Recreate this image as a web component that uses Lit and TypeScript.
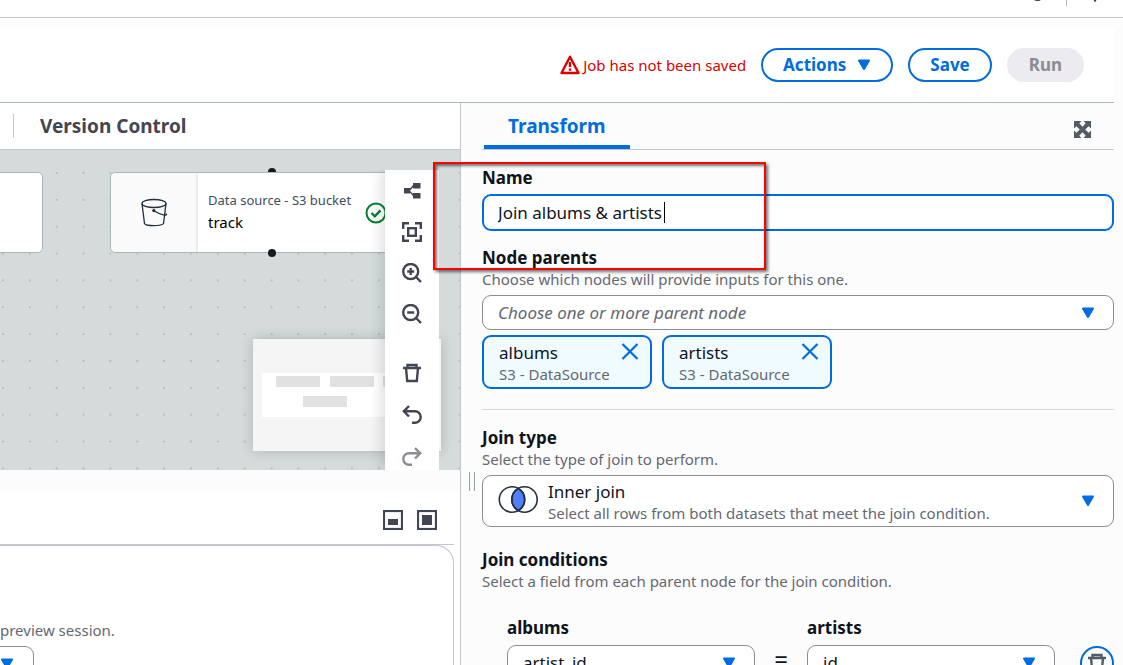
import { LitElement, html, css, svg, nothing } from "lit";
import { customElement, property, state } from "lit/decorators.js";

const base = css`
  * {
    box-sizing: border-box;
  }
  :host {
    font-family: "Noto Sans", "Open Sans", sans-serif;
    font-size: 17px;
    line-height: 22px;
    color: #0f141a;
  }
  button,
  input,
  select {
    font: inherit;
    color: inherit;
    margin: 0;
  }
  button {
    padding: 0;
    border: 0;
    background: none;
    display: flex;
    align-items: center;
    justify-content: center;
  }
  p {
    margin: 0;
  }
  svg {
    display: block;
    flex: none;
  }
`;

const caret = html`<svg class="caret" width="14" height="12" viewBox="0 0 14 12" aria-hidden="true">
  <path d="M2 1.5h10L7 10z" fill="#006ce0" stroke="#006ce0" stroke-width="2" stroke-linejoin="round" />
</svg>`;

const trash = svg`
  <path d="M1 5h18M5.5 5V2h9v3M4 5l1.2 13h9.6L16 5" />`;

const toolIcons: Record<string, unknown> = {
  layout: svg`<g fill="currentColor" stroke="none">
      <rect x="2" y="7" width="6" height="5.5" /><rect x="11" y="2" width="7.5" height="5.5" /><rect x="11" y="12" width="7.5" height="5.5" />
    </g><path d="M11.5 4.5L7 9.8l4.5 4.8" stroke-width="1.4" />`,
  fit: svg`<path d="M1.2 7V1.2H7M13 1.2h5.8V7M18.800 13v5.800H13M7 18.800H1.200V13" /><rect x="6.200" y="6.200" width="7.600" height="7.600" />`,
  zoomIn: svg`<circle cx="8.700" cy="8.500" r="7.500" /><path d="M14 14l5 5M5.200 8.500h7M8.700 5v7" />`,
  zoomOut: svg`<circle cx="8.700" cy="8.500" r="7.500" /><path d="M14 14l5 5M5.200 8.500h7" />`,
  remove: trash,
  undo: svg`<path d="M7 1L1.800 6.300 7 11.500M2 6.300h11a5.600 5.600 0 0 1 0 11.400h-3" />`,
  redo: svg`<path d="M13 1l5.200 5.300L13 11.500M18 6.300H7a5.600 5.600 0 0 0 0 11.400h3" />`,
};

@customElement("flow-canvas")
export class FlowCanvas extends LitElement {
  static styles = [
    base,
    css`
      :host {
        display: block;
        position: relative;
        overflow: hidden;
        background: #d5dbdb;
      }
      .dots {
        position: absolute;
        inset: 0;
        width: 100%;
        height: 100%;
      }
      .node {
        position: absolute;
        top: 22px;
        height: 81px;
        width: 324px;
        display: flex;
        background: #fff;
        border: 1px solid #aab7b8;
        border-radius: 5px;
      }
      .node.first {
        left: -281px;
      }
      .node.second {
        left: 110px;
      }
      .node::before,
      .node::after {
        content: "";
        position: absolute;
        left: 157px;
        width: 8px;
        height: 8px;
        border-radius: 4px;
        background: #16191f;
      }
      .node::before {
        top: -5px;
        clip-path: inset(0 0 4px 0);
      }
      .node::after {
        bottom: -5px;
      }
      .kind {
        width: 87px;
        display: flex;
        align-items: center;
        justify-content: center;
        background: #fafafa;
        border-right: 2px solid #eaeded;
        border-radius: 5px 0 0 5px;
      }
      .about {
        padding: 16px 14px 0 10px;
        font-size: 13px;
        color: #414d5c;
      }
      .title {
        color: #000;
        font-size: 15px;
      }
      .ok {
        align-self: center;
      }
      .minimap {
        position: absolute;
        left: 253px;
        bottom: 19px;
        box-shadow: 0 0 12px rgba(0, 28, 36, 0.2);
      }
      .tools {
        position: absolute;
        top: 20px;
        bottom: 0;
        right: 21px;
        width: 54px;
        background: #fff;
        box-shadow: -4px 0 12px rgba(0, 28, 36, 0.14);
        clip-path: inset(0 0 0 -20px);
        color: #424650;
      }
      .group button {
        width: 54px;
        height: 41px;
      }
      .group + .group {
        margin-top: 18px;
      }
      .group + .group button {
        height: 42px;
      }
      .tools button:disabled {
        color: #8c8c94;
      }
    `,
  ];

  private tool(name: string, label: string, disabled = false) {
    return html`<button aria-label=${label} ?disabled=${disabled}>
      <svg width="20" height="20" viewBox="0 0 20 20" fill="none" stroke="currentColor" stroke-width="2.4">${toolIcons[name]}</svg>
    </button>`;
  }

  render() {
    return html`
      <svg class="dots" aria-hidden="true">
        <defs>
          <pattern id="grid" x="2" y="22" width="26.86" height="26.86" patternUnits="userSpaceOnUse">
            <circle cx="0.900" cy="0.900" r="0.900" fill="#a3b0b1" />
          </pattern>
        </defs>
        <rect width="100%" height="100%" fill="url(#grid)" />
      </svg>
      <div class="node first"></div>
      <div class="node second">
        <div class="kind">
          <svg width="30" height="32" viewBox="0 0 30 32" fill="none" stroke="#232f3e" stroke-width="1.300">
            <ellipse cx="15" cy="6.500" rx="12" ry="4" />
            <path d="M3 6.500l2.500 20c1 2.800 17.500 2.800 19 0L27 6.500" />
            <path d="M15 13.800c3 2 7 4 11 4.500 2 0 2-1 .5-1.800" />
            <circle cx="14.800" cy="13.600" r="1" fill="#232f3e" />
          </svg>
        </div>
        <div class="about">
          <div>Data source - S3 bucket</div>
          <div class="title">track</div>
        </div>
        <svg class="ok" width="22" height="22" viewBox="0 0 22 22" fill="none" stroke="#00802f" stroke-width="2">
          <circle cx="11" cy="11" r="9.500" /><path d="M6.500 11l3.300 3.300 5.700-6" stroke-width="2.400" />
        </svg>
      </div>
      <svg class="minimap" width="188" height="112" viewBox="0 0 188 112" aria-hidden="true">
        <rect width="188" height="112" fill="#f5f5f5" />
        <rect x="9" y="34" width="170" height="44" fill="#fff" />
        <g fill="#e1e1e1">
          <rect x="23" y="37" width="44" height="11" /><rect x="77" y="37" width="44" height="11" />
          <rect x="130" y="37" width="44" height="11" /><rect x="50" y="57" width="44" height="11" />
        </g>
      </svg>
      <div class="tools">
        <div class="group">
          ${this.tool("layout", "Auto layout")} ${this.tool("fit", "Fit to screen")} ${this.tool("zoomIn", "Zoom in")}
          ${this.tool("zoomOut", "Zoom out")}
        </div>
        <div class="group">
          ${this.tool("remove", "Remove")} ${this.tool("undo", "Undo")} ${this.tool("redo", "Redo", true)}
        </div>
      </div>
    `;
  }
}

@customElement("drop-down")
export class DropDown extends LitElement {
  @property() label = "";
  @property() value = "";
  @property() note = "";
  @property({ type: Boolean }) placeholder = false;

  static styles = [
    base,
    css`
      :host {
        display: block;
      }
      .box {
        display: grid;
        align-items: center;
        background: #fff;
        border: 1px solid #8c8c94;
        border-radius: 9px;
      }
      .box > * {
        grid-area: 1 / 1;
      }
      select {
        appearance: none;
        width: 100%;
        height: 33px;
        padding: 0 40px 0 15px;
        border: 0;
        border-radius: 9px;
        background: transparent;
      }
      .placeholder select {
        font-style: italic;
        color: #656871;
      }
      .tall select {
        height: 50px;
        padding: 0 40px 18px 65px;
      }
      .note {
        padding: 23px 40px 0 65px;
        font-size: 15px;
        color: #656871;
        pointer-events: none;
      }
      .venn {
        margin: 0 0 2px 15px;
        pointer-events: none;
      }
      .caret {
        justify-self: end;
        margin-right: 18px;
        pointer-events: none;
      }
    `,
  ];

  render() {
    return html`<div class="box ${this.note ? "tall" : ""} ${this.placeholder ? "placeholder" : ""}">
      <select aria-label=${this.label}>
        <option>${this.value}</option>
      </select>
      ${this.note
        ? html`<span class="note">${this.note}</span>
            <svg class="venn" width="42" height="32" viewBox="0 0 42 32" fill="none" stroke="#232f3e" stroke-width="1.600">
              <path d="M20.250 4.500a12.700 12.700 0 0 1 0 22a12.700 12.700 0 0 1 0-22z" fill="#527fff" />
              <circle cx="14" cy="15.500" r="12.700" /><circle cx="26.500" cy="15.500" r="12.700" />
            </svg>`
        : nothing}
      ${caret}
    </div>`;
  }
}

@customElement("app-root")
export class AppRoot extends LitElement {
  @state() private name = "Join albums & artists";
  private parents = ["albums", "artists"];

  static styles = [
    base,
    css`
      :host {
        display: flex;
        flex-direction: column;
        height: 100vh;
        overflow: hidden;
        background: #fcfcfc;
      }
      .topbar {
        flex: none;
        height: 18px;
        background: #fff;
        border-bottom: 1px solid #c6c6cd;
        display: flex;
        justify-content: flex-end;
      }
      .header {
        flex: none;
        margin: 10px 9px 0 0;
        height: 75px;
        padding: 0 30px 0 0;
        background: #fff;
        border-bottom: 1px solid #aab7b8;
        display: flex;
        align-items: center;
        justify-content: flex-end;
        gap: 15px;
      }
      .warning {
        display: flex;
        align-items: center;
        gap: 3px;
        font-size: 15px;
        line-height: 20px;
        color: #db0000;
      }
      .pill {
        height: 34px;
        padding: 0 20px;
        border: 2px solid #006ce0;
        border-radius: 17px;
        background: #fff;
        color: #006ce0;
        font-weight: 700;
        gap: 11px;
      }
      .pill:disabled {
        border-color: #ebebf0;
        background: #ebebf0;
        color: #8c8c94;
      }
      .main {
        flex: 1;
        min-height: 0;
        display: grid;
        grid-template-columns: 461px minmax(0, 1fr);
        grid-template-rows: minmax(0, 1fr);
      }
      .left {
        display: flex;
        flex-direction: column;
        min-height: 0;
        border-right: 1px solid #c6c6cd;
      }
      .tabs {
        flex: none;
        height: 47px;
        display: flex;
        align-items: center;
        border-bottom: 1px solid #c6c6cd;
      }
      .left .tabs {
        background: #fff;
        padding-left: 13px;
      }
      .tab {
        font-size: 19px;
        font-weight: 700;
        color: #424650;
      }
      .left .tab {
        height: 24px;
        padding-left: 26px;
        border-left: 1px solid #c6c6cd;
      }
      flow-canvas {
        flex: 1;
      }
      .bottom {
        flex: none;
        height: 173px;
        margin-top: 22px;
        background: #fff;
        padding-right: 6px;
        display: flex;
        flex-direction: column;
      }
      .sizes {
        height: 53px;
        flex: none;
        display: flex;
        align-items: center;
        justify-content: flex-end;
        gap: 14px;
        padding: 4px 17px 0 0;
        border-bottom: 1px solid #c6c6cd;
      }
      .card {
        flex: 1;
        min-height: 0;
        border: 1px solid #c6c6cd;
        border-left: 0;
        border-bottom: 0;
        border-radius: 0 18px 0 0;
        padding-top: 74px;
      }
      .session {
        width: 34px;
        height: 35px;
        border: 1px solid #8c8c94;
        border-left: 0;
        border-radius: 0 9px 9px 0;
        justify-content: flex-start;
      }
      .right {
        position: relative;
        padding: 0 9px 0 21px;
      }
      .right .tabs {
        justify-content: space-between;
        padding: 0 23px 0 2px;
      }
      .right .tab {
        height: 46px;
        padding: 4px 24px 0;
        color: #006ce0;
        border-bottom: 4px solid #006ce0;
        border-radius: 2px 2px 0 0;
      }
      .expand {
        padding-top: 6px;
      }
      .handle {
        position: absolute;
        left: 8px;
        top: 369px;
        width: 6px;
        height: 19px;
        border: solid #95a5a6;
        border-width: 0 1px;
      }
      .callout {
        position: absolute;
        left: -28px;
        top: 59px;
        width: 333px;
        height: 108px;
        border: 2px solid #f00;
        box-shadow: 2px 2px 3px rgba(0, 0, 0, 0.55), inset 2px 2px 3px rgba(0, 0, 0, 0.55);
        pointer-events: none;
      }
      .label {
        display: block;
        font-weight: 700;
      }
      .hint {
        font-size: 15px;
        line-height: 20px;
        color: #656871;
        margin-bottom: 6px;
      }
      .field {
        margin-bottom: 16px;
      }
      .name {
        margin-top: 17px;
      }
      .entry {
        position: relative;
        margin-top: 5px;
      }
      .entry input {
        display: block;
        width: 100%;
        height: 37px;
        padding: 0 14px;
        border: 2px solid #006ce0;
        border-radius: 9px;
        background: #fff;
        outline: none;
      }
      .cursor {
        position: absolute;
        left: 182px;
        top: 8px;
        width: 1px;
        height: 21px;
        background: #000;
      }
      .tokens {
        display: flex;
        gap: 10px;
        margin-top: 5px;
      }
      .token {
        width: 170px;
        height: 54px;
        padding: 5px 11px 5px 15px;
        display: flex;
        justify-content: space-between;
        align-items: flex-start;
        border: 2px solid #006ce0;
        border-radius: 9px;
        background: #f0fbff;
      }
      .token .hint {
        margin: 0;
        white-space: nowrap;
      }
      .token > div {
        width: 0;
        flex: 1;
      }
      .rule {
        margin: 20px 0 17px;
        border: 0;
        border-top: 1px solid #d5d5da;
      }
      .conditions {
        margin-top: 22px;
      }
      .row {
        display: grid;
        grid-template-columns: minmax(0, 1fr) 52px minmax(0, 1fr) 59px;
        align-items: end;
        margin-top: 26px;
        padding-left: 25px;
      }
      .row drop-down {
        margin-top: 6px;
      }
      .equals {
        height: 35px;
        text-align: center;
        font-size: 24px;
        line-height: 28px;
      }
      .drop {
        justify-self: end;
        width: 34px;
        height: 34px;
        border: 2px solid #006ce0;
        border-radius: 17px;
        color: #545b64;
      }
    `,
  ];

  render() {
    return html`
      <div class="topbar">
        <svg width="100" height="8" viewBox="0 0 100 8" aria-hidden="true">
          <path d="M10 -3a5 5 0 0 0 7 2.500" stroke="#424650" stroke-width="2" fill="none" />
          <path d="M43.500 0v6" stroke="#b4b4bb" />
          <path d="M70.500 -2l1.500 2.500 1.500-2.500" stroke="#424650" stroke-width="2" fill="none" />
        </svg>
      </div>
      <header class="header">
        <div class="warning">
          <svg width="20" height="20" viewBox="0 0 20 20" fill="none" stroke="#db0000" stroke-width="2.400">
            <path d="M10 1.800L1.500 18h17z" stroke-linejoin="round" /><path d="M10 7v5M10 13.500v2.300" />
          </svg>
          <span>Job has not been saved</span>
        </div>
        <button class="pill">Actions ${caret}</button>
        <button class="pill">Save</button>
        <button class="pill" disabled>Run</button>
      </header>
      <div class="main">
        <section class="left">
          <div class="tabs"><button class="tab">Version Control</button></div>
          <flow-canvas></flow-canvas>
          <div class="bottom">
            <div class="sizes">
              <button aria-label="Half height">
                <svg width="20" height="20" viewBox="0 0 20 20">
                  <rect x="1" y="1" width="18" height="18" fill="none" stroke="#424650" stroke-width="2.200" />
                  <rect x="5" y="9" width="10" height="6" fill="#424650" />
                </svg>
              </button>
              <button aria-label="Full height">
                <svg width="20" height="20" viewBox="0 0 20 20">
                  <rect x="1" y="1" width="18" height="18" fill="none" stroke="#424650" stroke-width="2.200" />
                  <rect x="5" y="5" width="10" height="10" fill="#424650" />
                </svg>
              </button>
            </div>
            <div class="card">
              <p class="hint">preview session.</p>
              <button class="session" aria-label="Session options">${caret}</button>
            </div>
          </div>
        </section>
        <section class="right">
          <div class="tabs">
            <button class="tab">Transform</button>
            <button class="expand" aria-label="Expand panel">
              <svg width="17" height="17" viewBox="0 0 17 17" fill="#545b64">
                <path d="M0 0h7.500L5.300 2.300 8.500 5.800l3.200-3.500L9.500 0H17v7.500l-2.300-2.200-3.500 3.200 3.500 3.200L17 9.500V17H9.500l2.200-2.300-3.200-3.500-3.200 3.500L7.500 17H0V9.500l2.300 2.200 3.500-3.200-3.500-3.200L0 7.500z" />
              </svg>
            </button>
          </div>
          <div class="field name">
            <label class="label" for="name">Name</label>
            <div class="entry">
              <input id="name" .value=${this.name} @input=${(e: Event) => (this.name = (e.target as HTMLInputElement).value)} />
              <span class="cursor"></span>
            </div>
          </div>
          <div class="label">Node parents</div>
          <p class="hint">Choose which nodes will provide inputs for this one.</p>
          <drop-down label="Node parents" value="Choose one or more parent node" placeholder></drop-down>
          <div class="tokens">
            ${this.parents.map(
              (p) => html`<div class="token">
                <div>
                  <div>${p}</div>
                  <div class="hint">S3 - DataSource</div>
                </div>
                <button aria-label="Remove ${p}">
                  <svg width="18" height="20" viewBox="0 0 18 20" fill="none" stroke="#006ce0" stroke-width="2.200">
                    <path d="M1.500 2l15 15M16.500 2l-15 15" />
                  </svg>
                </button>
              </div>`
            )}
          </div>
          <hr class="rule" />
          <div class="label">Join type</div>
          <p class="hint">Select the type of join to perform.</p>
          <drop-down
            label="Join type"
            value="Inner join"
            note="Select all rows from both datasets that meet the join condition."
          ></drop-down>
          <div class="conditions">
            <div class="label">Join conditions</div>
            <p class="hint">Select a field from each parent node for the join condition.</p>
          </div>
          <div class="row">
            <div><span class="label">albums</span><drop-down label="albums" value="artist_id"></drop-down></div>
            <span class="equals">=</span>
            <div><span class="label">artists</span><drop-down label="artists" value="id"></drop-down></div>
            <button class="drop" aria-label="Remove condition">
              <svg width="20" height="20" viewBox="0 0 20 20" fill="none" stroke="currentColor" stroke-width="2.400">${trash}</svg>
            </button>
          </div>
          <div class="handle"></div>
          <div class="callout"></div>
        </section>
      </div>
    `;
  }
}
